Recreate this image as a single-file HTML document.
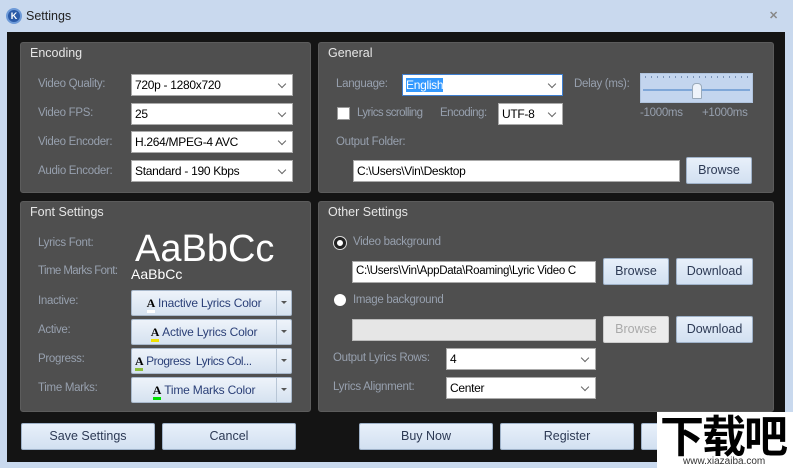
<!DOCTYPE html>
<html><head><meta charset="utf-8"><style>
*{margin:0;padding:0;box-sizing:border-box}
body{width:793px;height:468px;background:#c9d9ee;font-family:"Liberation Sans",sans-serif;font-size:12px;position:relative;overflow:hidden}
.a{position:absolute}
.dark{left:7px;top:32px;width:778px;height:430px;background:#141414}
.p{position:absolute;background:#4f4f4f;border:1px solid #5c5c5c;border-radius:3px}
.h{position:absolute;color:#e6e6e6;font-size:12.5px}
.l{position:absolute;color:#97a0ae;font-size:11.5px;letter-spacing:-0.3px;white-space:nowrap}
.in{position:absolute;background:#fff;border:1px solid #aaa;color:#000;font-size:12px;letter-spacing:-0.3px;padding:3px 3px;height:22px;white-space:nowrap;overflow:hidden}
.dd::after{content:"";position:absolute;right:7px;top:6px;width:5px;height:5px;border-right:1px solid #666;border-bottom:1px solid #666;transform:rotate(45deg)}
.b{position:absolute;background:linear-gradient(#e8f0fa,#d2e0f1);border:1px solid #9fb2c9;border-radius:2px;color:#2d3a55;font-size:12.5px;text-align:center}
.cb{position:absolute;background:linear-gradient(#eef3fa,#d6e2f0);border:1px solid #a9b9cc;border-radius:2px;color:#2a3f77;font-size:12px;letter-spacing:-0.2px;height:26px;width:161px}
.cb .t{position:absolute;left:0;top:0;width:145px;height:24px;line-height:24px;text-align:center;border-right:1px solid #b8c6d6;white-space:nowrap;overflow:hidden}
.cb .ar{position:absolute;right:4px;top:10px;border-left:3px solid transparent;border-right:3px solid transparent;border-top:3px solid #555}
.A{font-family:"Liberation Serif",serif;font-weight:bold;color:#000;display:inline-block;border-bottom:3px solid;line-height:14px;margin-right:3px}
</style></head><body>
<div class="a" style="left:6px;top:8px;width:16px;height:16px;border-radius:50%;background:#2a5aa8;border:2px solid #6d9ad8;color:#fff;font-size:9px;text-align:center;line-height:12px;font-weight:bold">K</div>
<div class="a" style="left:26px;top:9px;font-size:12.5px;color:#222">Settings</div>
<div class="a" style="left:769px;top:9px;font-size:11px;color:#888;font-weight:bold">✕</div>
<div class="a dark"></div>

<div class="p" style="left:20px;top:42px;width:291px;height:151px"></div>
<div class="h" style="left:30px;top:46px">Encoding</div>
<div class="l" style="left:38px;top:78px">Video Quality:</div>
<div class="l" style="left:38px;top:107px">Video FPS:</div>
<div class="l" style="left:38px;top:136px">Video Encoder:</div>
<div class="l" style="left:38px;top:165px">Audio Encoder:</div>
<div class="in dd" style="left:131px;top:74px;width:162px">720p - 1280x720</div>
<div class="in dd" style="left:131px;top:103px;width:162px">25</div>
<div class="in dd" style="left:131px;top:131px;width:162px">H.264/MPEG-4 AVC</div>
<div class="in dd" style="left:131px;top:160px;width:162px">Standard - 190 Kbps</div>

<div class="p" style="left:318px;top:42px;width:456px;height:151px"></div>
<div class="h" style="left:328px;top:46px">General</div>
<div class="l" style="left:336px;top:78px">Language:</div>
<div class="in dd" style="left:402px;top:74px;width:161px;border-color:#3f7fd0"><span style="background:#3399ff;color:#fff">English</span></div>
<div class="l" style="left:574px;top:78px">Delay (ms):</div>
<div class="a" style="left:640px;top:73px;width:113px;height:30px;background:#c3d5ee;border:1px solid #b0c4de"></div>
<div class="a" style="left:645px;top:76px;width:103px;height:2px;background:repeating-linear-gradient(90deg,#7a93b8 0 1px,transparent 1px 6px)"></div>
<div class="a" style="left:643px;top:89px;width:107px;height:2px;background:#7fa7d8"></div>
<div class="a" style="left:692px;top:83px;width:10px;height:16px;background:#eef3fa;border:1px solid #9ab;border-radius:4px 4px 1px 1px"></div>
<div class="l" style="left:640px;top:107px">-1000ms</div>
<div class="l" style="left:702px;top:107px">+1000ms</div>
<div class="a" style="left:337px;top:107px;width:13px;height:13px;background:#fff;border:1px solid #999"></div>
<div class="l" style="left:357px;top:107px;letter-spacing:-0.6px">Lyrics scrolling</div>
<div class="l" style="left:440px;top:107px;letter-spacing:-0.5px">Encoding:</div>
<div class="in dd" style="left:498px;top:103px;width:65px">UTF-8</div>
<div class="l" style="left:336px;top:136px">Output Folder:</div>
<div class="in" style="left:353px;top:160px;width:327px">C:\Users\Vin\Desktop</div>
<div class="b" style="left:686px;top:157px;width:66px;height:27px;line-height:25px">Browse</div>

<div class="p" style="left:20px;top:201px;width:291px;height:211px"></div>
<div class="h" style="left:30px;top:205px">Font Settings</div>
<div class="l" style="left:38px;top:237px">Lyrics Font:</div>
<div class="a" style="left:135px;top:228px;font-size:38px;color:#fff">AaBbCc</div>
<div class="l" style="left:38px;top:265px;letter-spacing:-0.6px">Time Marks Font:</div>
<div class="a" style="left:131px;top:266px;font-size:14px;color:#fff">AaBbCc</div>
<div class="l" style="left:38px;top:295px">Inactive:</div>
<div class="l" style="left:38px;top:324px">Active:</div>
<div class="l" style="left:38px;top:353px">Progress:</div>
<div class="l" style="left:38px;top:382px">Time Marks:</div>
<div class="cb" style="left:131px;top:290px"><div class="t"><span class="A" style="border-color:#fff">A</span>Inactive Lyrics Color</div><div class="ar"></div></div>
<div class="cb" style="left:131px;top:319px"><div class="t"><span class="A" style="border-color:#f0e000">A</span>Active Lyrics Color</div><div class="ar"></div></div>
<div class="cb" style="left:131px;top:348px"><div class="t" style="text-align:left;padding-left:3px;letter-spacing:-0.5px"><span class="A" style="border-color:#8cbf3a">A</span>Progress&nbsp; Lyrics Col...</div><div class="ar"></div></div>
<div class="cb" style="left:131px;top:377px"><div class="t"><span class="A" style="border-color:#00e000">A</span>Time Marks Color</div><div class="ar"></div></div>

<div class="p" style="left:318px;top:201px;width:456px;height:211px"></div>
<div class="h" style="left:328px;top:205px">Other Settings</div>
<div class="a" style="left:334px;top:237px;width:12px;height:12px;border-radius:50%;background:#fff;border:3px solid #222;box-shadow:0 0 0 1px #ddd"></div>
<div class="l" style="left:353px;top:236px">Video background</div>
<div class="in" style="left:352px;top:261px;width:244px;font-size:11.5px">C:\Users\Vin\AppData\Roaming\Lyric Video C</div>
<div class="b" style="left:603px;top:258px;width:66px;height:27px;line-height:25px">Browse</div>
<div class="b" style="left:676px;top:258px;width:77px;height:27px;line-height:25px">Download</div>
<div class="a" style="left:334px;top:294px;width:12px;height:12px;border-radius:50%;background:#fff"></div>
<div class="l" style="left:353px;top:294px">Image background</div>
<div class="a" style="left:352px;top:319px;width:244px;height:22px;background:#e6e6e6;border:1px solid #bbb"></div>
<div class="b" style="left:603px;top:316px;width:66px;height:27px;line-height:25px;background:#ececec;border-color:#ccc;color:#aaa">Browse</div>
<div class="b" style="left:676px;top:316px;width:77px;height:27px;line-height:25px">Download</div>
<div class="l" style="left:333px;top:352px">Output Lyrics Rows:</div>
<div class="in dd" style="left:446px;top:348px;width:150px">4</div>
<div class="l" style="left:333px;top:381px">Lyrics Alignment:</div>
<div class="in dd" style="left:446px;top:377px;width:150px">Center</div>

<div class="b" style="left:21px;top:423px;width:134px;height:27px;line-height:25px">Save Settings</div>
<div class="b" style="left:162px;top:423px;width:134px;height:27px;line-height:25px">Cancel</div>
<div class="b" style="left:359px;top:423px;width:134px;height:27px;line-height:25px">Buy Now</div>
<div class="b" style="left:500px;top:423px;width:134px;height:27px;line-height:25px">Register</div>
<div class="b" style="left:641px;top:423px;width:134px;height:27px"></div>

<div class="a" style="left:657px;top:412px;width:136px;height:56px;background:#fff"></div>
<div class="a" style="left:660px;top:408px;font-size:44px;font-weight:bold;color:#000;font-family:'Noto Sans CJK SC',sans-serif;line-height:50px;letter-spacing:-2px">下载吧</div>
<div class="a" style="left:683px;top:456px;font-size:10px;color:#333;line-height:11px">www.xiazaiba.com</div>
</body></html>
